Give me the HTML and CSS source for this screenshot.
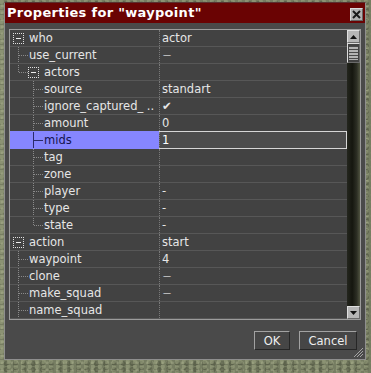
FILE: index.html
```html
<!DOCTYPE html>
<html lang="en">
<head>
  <meta charset="UTF-8">
  <title>Properties for "waypoint"</title>
  <link rel="stylesheet" href="styles.css">
</head>
<body>
  <div class="win">
    <div class="title">
      <span class="title-text">Properties for "waypoint"</span>
      <span class="close">
        <svg width="9" height="9" viewBox="0 0 9 9"><path d="M1 1L8 8M8 1L1 8" stroke="#1a1a1a" stroke-width="2"/></svg>
      </span>
    </div>

    <div class="content">
      <div class="tree">
        <div class="rows">
          <div class="row"><div class="name"><span class="box"></span><span class="lbl">who</span></div><div class="val">actor</div></div>
          <div class="row"><div class="name"><span class="g tee"></span><span class="lbl">use_current</span></div><div class="val"><span class="dash">—</span></div></div>
          <div class="row"><div class="name"><span class="g ell"></span><span class="box"></span><span class="lbl">actors</span></div><div class="val"></div></div>
          <div class="row"><div class="name"><span class="g"></span><span class="g tee"></span><span class="lbl">source</span></div><div class="val">standart</div></div>
          <div class="row"><div class="name"><span class="g"></span><span class="g tee"></span><span class="lbl">ignore_captured_ ..</span></div><div class="val">✔</div></div>
          <div class="row"><div class="name"><span class="g"></span><span class="g tee"></span><span class="lbl">amount</span></div><div class="val">0</div></div>
          <div class="row sel"><div class="name"><span class="g"></span><span class="g tee"></span><span class="lbl">mids</span></div><div class="val">1</div></div>
          <div class="row"><div class="name"><span class="g"></span><span class="g tee"></span><span class="lbl">tag</span></div><div class="val"></div></div>
          <div class="row"><div class="name"><span class="g"></span><span class="g tee"></span><span class="lbl">zone</span></div><div class="val"></div></div>
          <div class="row"><div class="name"><span class="g"></span><span class="g tee"></span><span class="lbl">player</span></div><div class="val">-</div></div>
          <div class="row"><div class="name"><span class="g"></span><span class="g tee"></span><span class="lbl">type</span></div><div class="val">-</div></div>
          <div class="row"><div class="name"><span class="g"></span><span class="g ell"></span><span class="lbl">state</span></div><div class="val">-</div></div>
          <div class="row"><div class="name"><span class="box"></span><span class="lbl">action</span></div><div class="val">start</div></div>
          <div class="row"><div class="name"><span class="g tee"></span><span class="lbl">waypoint</span></div><div class="val">4</div></div>
          <div class="row"><div class="name"><span class="g tee"></span><span class="lbl">clone</span></div><div class="val"><span class="dash">—</span></div></div>
          <div class="row"><div class="name"><span class="g tee"></span><span class="lbl">make_squad</span></div><div class="val"><span class="dash">—</span></div></div>
          <div class="row"><div class="name"><span class="g tee"></span><span class="lbl">name_squad</span></div><div class="val"></div></div>
        </div>
        <div class="sbar">
          <div class="sb-btn"><svg width="7" height="4" viewBox="0 0 7 4"><path d="M0 4L3.5 0L7 4Z" fill="#111"/></svg></div>
          <div class="thumb"></div>
          <div class="track"></div>
          <div class="sb-btn"><svg width="7" height="4" viewBox="0 0 7 4"><path d="M0 0L3.5 4L7 0Z" fill="#111"/></svg></div>
        </div>
      </div>

      <div class="buttons">
        <button class="btn ok">OK</button>
        <button class="btn cancel">Cancel</button>
      </div>
    </div>

    <svg class="grip" width="12" height="12" viewBox="0 0 12 12">
      <path d="M11 2L2 11M11 5L5 11M11 8L8 11" stroke="#a5a5a5" stroke-width="1"/>
    </svg>
  </div>
</body>
</html>
```

FILE: styles.css
```css
body {
  margin: 0;
  width: 371px;
  height: 373px;
  overflow: hidden;
  font-family: "DejaVu Sans", sans-serif;
  background-color: #767d62;
  background-image:
    radial-gradient(circle at 20% 30%, rgba(170,178,140,.4) 0 2px, transparent 3px),
    radial-gradient(circle at 70% 60%, rgba(45,50,35,.35) 0 2px, transparent 3px),
    radial-gradient(circle at 45% 85%, rgba(185,190,155,.35) 0 1px, transparent 2px);
  background-size: 7px 5px, 9px 6px, 5px 7px;
}

.win {
  position: relative;
  box-sizing: border-box;
  width: 362px;
  height: 358px;
  margin: 2px 0 0 4px;
  border: 1px solid #8e8e8e;
  border-top-color: #5a3030;
  background: #4a4a4a;
  display: flex;
  flex-direction: column;
}

.title {
  height: 20px;
  background: #6a0303;
  display: flex;
  justify-content: space-between;
  align-items: flex-end;
  padding: 0 2px 2px 2px;
  box-sizing: border-box;
}
.title-text {
  color: #fff;
  font-weight: bold;
  font-size: 13px;
  letter-spacing: 0.3px;
  line-height: 17px;
}
.close {
  width: 13px;
  height: 13px;
  box-sizing: border-box;
  background: #b2b2b2;
  border: 1px solid;
  border-color: #dadada #666 #666 #dadada;
  display: flex;
  align-items: center;
  justify-content: center;
}

.content { flex: 1; padding: 6px 4px 0 4px; }

.tree {
  display: flex;
  border: 1px solid #9c9c9c;
  background: #424242;
}
.rows { width: 337px; }

.row {
  display: flex;
  height: 16px;
  border-bottom: 1px solid #575757;
  color: #e6e6e6;
  font-size: 11.5px;
  line-height: 16px;
}
.name {
  width: 149px;
  box-sizing: border-box;
  padding-left: 3px;
  display: flex;
  align-items: center;
  white-space: nowrap;
  overflow: hidden;
}
.lbl { margin-left: 1px; }
.val {
  flex: 1;
  border-left: 1px dotted #7a7a7a;
  padding-left: 2px;
  white-space: nowrap;
}
.dash { font-size: 8px; vertical-align: 1px; margin-left: 1px; }

.box {
  width: 11px;
  height: 11px;
  box-sizing: border-box;
  border: 1px dotted #e0e0e0;
  margin-right: 4px;
  display: flex;
  align-items: center;
  justify-content: center;
  flex: none;
}
.box::before {
  content: "";
  width: 5px;
  height: 1px;
  background: #eee;
}

.g {
  position: relative;
  width: 15px;
  height: 16px;
  flex: none;
}
.g.tee::before, .g.ell::before {
  content: "";
  position: absolute;
  left: 5px;
  top: -1px;
  bottom: -1px;
  border-left: 1px dotted #8a8a8a;
}
.g.ell::before { bottom: 8px; }
.g.tee::after, .g.ell::after {
  content: "";
  position: absolute;
  left: 6px;
  top: 8px;
  width: 9px;
  border-top: 1px dotted #8a8a8a;
}

.row.sel .name {
  background: #8686ff;
  color: #141450;
  box-shadow: 0 -1px 0 #8686ff, 0 1px 0 #8686ff;
}
.row.sel .g::before { border-left: 1px solid #2a2a6a; }
.row.sel .g::after { border-top: 1px solid #2a2a6a; }
.row.sel .val {
  background: #4c4c4c;
  color: #fff;
  box-shadow: 0 -1px 0 #d6d6d6, 0 1px 0 #d6d6d6, inset -1px 0 0 #d6d6d6;
}

.sbar {
  width: 13px;
  display: flex;
  flex-direction: column;
}
.sb-btn {
  height: 13px;
  box-sizing: border-box;
  background: #b6b6b6;
  border: 1px solid;
  border-color: #e0e0e0 #6a6a6a #6a6a6a #e0e0e0;
  display: flex;
  align-items: center;
  justify-content: center;
}
.thumb {
  height: 20px;
  box-sizing: border-box;
  border: 1px solid;
  border-color: #dcdcdc #6a6a6a #6a6a6a #dcdcdc;
  background: repeating-linear-gradient(to bottom, #b4b4b4 0 2px, #4a4a4a 2px 3px);
  background-clip: content-box;
  padding: 2px 1px;
  background-color: #b4b4b4;
}
.track {
  flex: 1;
  background: linear-gradient(to right, #24261e, #15160f 40%, #2c2e24 75%, #505340);
}

.buttons {
  display: flex;
  justify-content: flex-end;
  gap: 9px;
  margin-top: 11px;
  padding-right: 4px;
}
.btn {
  height: 19px;
  padding: 0;
  background: #464646;
  color: #eee;
  font-family: "DejaVu Sans", sans-serif;
  font-size: 11.5px;
  border: 1px solid;
  border-color: #a2a2a2 #262626 #262626 #a2a2a2;
}
.ok { width: 36px; }
.cancel { width: 58px; }

.grip {
  position: absolute;
  right: 1px;
  bottom: 1px;
}
```
